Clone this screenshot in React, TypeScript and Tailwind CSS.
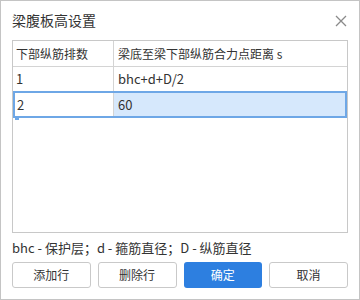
import React from "react";

const font = { fontFamily: '"Microsoft YaHei", "Noto Sans CJK SC", "Noto Sans", sans-serif' };

export default function App() {
    return (
        <div className="w-[360px] h-[300px] bg-white border border-[#c4c4c4] flex flex-col text-[#333]" style={font}>
            <div className="h-[39px] flex items-center justify-between pl-[11px] pr-[12px]">
                <span className="text-[14px] text-[#333]">梁腹板高设置</span>
                <svg width="12" height="12" viewBox="0 0 12 12" className="text-[#8a8a8a]">
                    <path d="M1 1L11 11M11 1L1 11" stroke="currentColor" strokeWidth="1.3" />
                </svg>
            </div>
            <div className="mx-[11px] h-[193px] border border-[#c8c8c8] flex flex-col text-[12px]">
                <div className="flex h-[26px] border-b border-[#d4d4d4]">
                    <div className="w-[101px] border-r border-[#d4d4d4] flex items-center pl-[3px]">下部纵筋排数</div>
                    <div className="flex-1 flex items-center pl-[4px]">梁底至梁下部纵筋合力点距离 s</div>
                </div>
                <div className="flex h-[25px] border-b border-[#d4d4d4] text-[13px]">
                    <div className="w-[101px] border-r border-[#d4d4d4] flex items-center pl-[3px]">1</div>
                    <div className="flex-1 flex items-center pl-[4px]">bhc+d+D/2</div>
                </div>
                <div className="relative flex h-[27px] border-2 border-[#6ea7e6] -mt-px text-[13px]">
                    <div className="w-[99px] border-r border-[#d4d4d4] flex items-center pl-[2px] bg-white">2</div>
                    <div className="flex-1 flex items-center pl-[4px] bg-[#d6e8fc]">60</div>
                    <div className="absolute left-0 bottom-[-4px] w-[4px] h-[4px] bg-[#6ea7e6]" />
                </div>
            </div>
            <div className="mx-[11px] mt-[7px] text-[13px] leading-[16px]">bhc - 保护层；d - 箍筋直径；D - 纵筋直径</div>
            <div className="mx-[11px] mt-[6px] grid grid-cols-4 gap-[7px] text-[12px]">
                <button className="h-[26px] rounded-[3px] border border-[#c9c9c9] bg-white text-[#333]">添加行</button>
                <button className="h-[26px] rounded-[3px] border border-[#c9c9c9] bg-white text-[#333]">删除行</button>
                <button className="h-[26px] rounded-[3px] bg-[#2d7fe0] text-white">确定</button>
                <button className="h-[26px] rounded-[3px] border border-[#c9c9c9] bg-white text-[#333]">取消</button>
            </div>
        </div>
    );
}
